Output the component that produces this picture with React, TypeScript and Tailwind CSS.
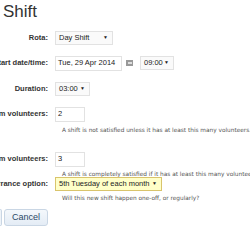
import React from "react";

function Label({ children }: { children: React.ReactNode }) {
  return (
    <div className="flex h-[16px] w-[48px] items-center justify-end whitespace-nowrap text-[7.5px] font-bold text-[#333]">
      {children}
    </div>
  );
}

function Select({
  value,
  width,
  yellow,
}: {
  value: string;
  width: string;
  yellow?: boolean;
}) {
  return (
    <div
      className={
        "flex h-[14px] items-center justify-between border pl-[3px] pr-[4px] text-[7.5px] text-[#222] " +
        width +
        (yellow
          ? " border-[#d9c46c] bg-[#ffffc8]"
          : " border-[#e2e2e2] bg-[#fafafa]")
      }
    >
      <span>{value}</span>
      <span className="text-[5px]">▼</span>
    </div>
  );
}

function Input({ value, width }: { value: string; width: string }) {
  return (
    <div
      className={
        "flex h-[15px] items-center border border-[#e2e2e2] bg-white pl-[2px] text-[7.5px] text-[#222] " +
        width
      }
    >
      {value}
    </div>
  );
}

function Help({ children, mt }: { children: React.ReactNode; mt: string }) {
  return (
    <div
      className={
        "ml-[62px] whitespace-nowrap text-[5.8px] leading-[8px] text-[#555] " + mt
      }
      style={{ fontFamily: '"DejaVu Sans", Verdana, sans-serif' }}
    >
      {children}
    </div>
  );
}

export default function App() {
  return (
    <div
      className="h-[250px] w-[250px] overflow-hidden bg-white"
      style={{ fontFamily: '"Liberation Sans", Arial, sans-serif' }}
    >
      <h1 className="pl-[3px] pt-[2px] text-[17px] leading-[20px] text-[#333]">
        Shift
      </h1>

      <div className="mt-[8px] flex flex-col">
        <div className="flex items-center gap-[7px]">
          <Label>Rota:</Label>
          <Select value="Day Shift" width="w-[58px]" />
        </div>

        <div className="mt-[9px] flex items-center gap-[7px]">
          <Label>Start date/time:</Label>
          <Input value="Tue, 29 Apr 2014" width="w-[67px]" />
          <div className="-ml-[3px] flex h-[6px] w-[7px] items-center justify-center bg-[#999]">
            <div className="h-[2px] w-[4px] bg-[#ddd]" />
          </div>
          <Select value="09:00" width="w-[34px]" />
        </div>

        <div className="mt-[10px] flex items-center gap-[7px]">
          <Label>Duration:</Label>
          <Select value="03:00" width="w-[35px]" />
        </div>

        <div className="mt-[9px] flex items-center gap-[7px]">
          <Label>Minimum volunteers:</Label>
          <Input value="2" width="w-[30px]" />
        </div>
        <Help mt="mt-[4px]">
          A shift is not satisfied unless it has at least this many volunteers.
        </Help>

        <div className="mt-[17px] flex items-center gap-[7px]">
          <Label>Maximum volunteers:</Label>
          <Input value="3" width="w-[30px]" />
        </div>
        <Help mt="mt-[3px]">
          A shift is completely satisfied if it has at least this many volunteers.
        </Help>

        <div className="-mt-[2px] flex items-center gap-[7px]">
          <Label>Recurrance option:</Label>
          <Select value="5th Tuesday of each month" width="w-[107px]" yellow />
        </div>
        <Help mt="mt-[2px]">Will this new shift happen one-off, or regularly?</Help>

        <div className="mt-[7px] flex items-center">
          <div className="h-[17px] w-[2px] rounded-r-[3px] border border-l-0 border-[#c9d6e4] bg-[#eef3f8]" />
          <button
            type="button"
            className="ml-[2px] h-[17px] w-[44px] rounded-[3px] border border-[#c9d6e4] bg-gradient-to-b from-[#f4f8fc] to-[#e4ecf5] text-[9px] text-[#2b4866]"
          >
            Cancel
          </button>
        </div>
      </div>
    </div>
  );
}
